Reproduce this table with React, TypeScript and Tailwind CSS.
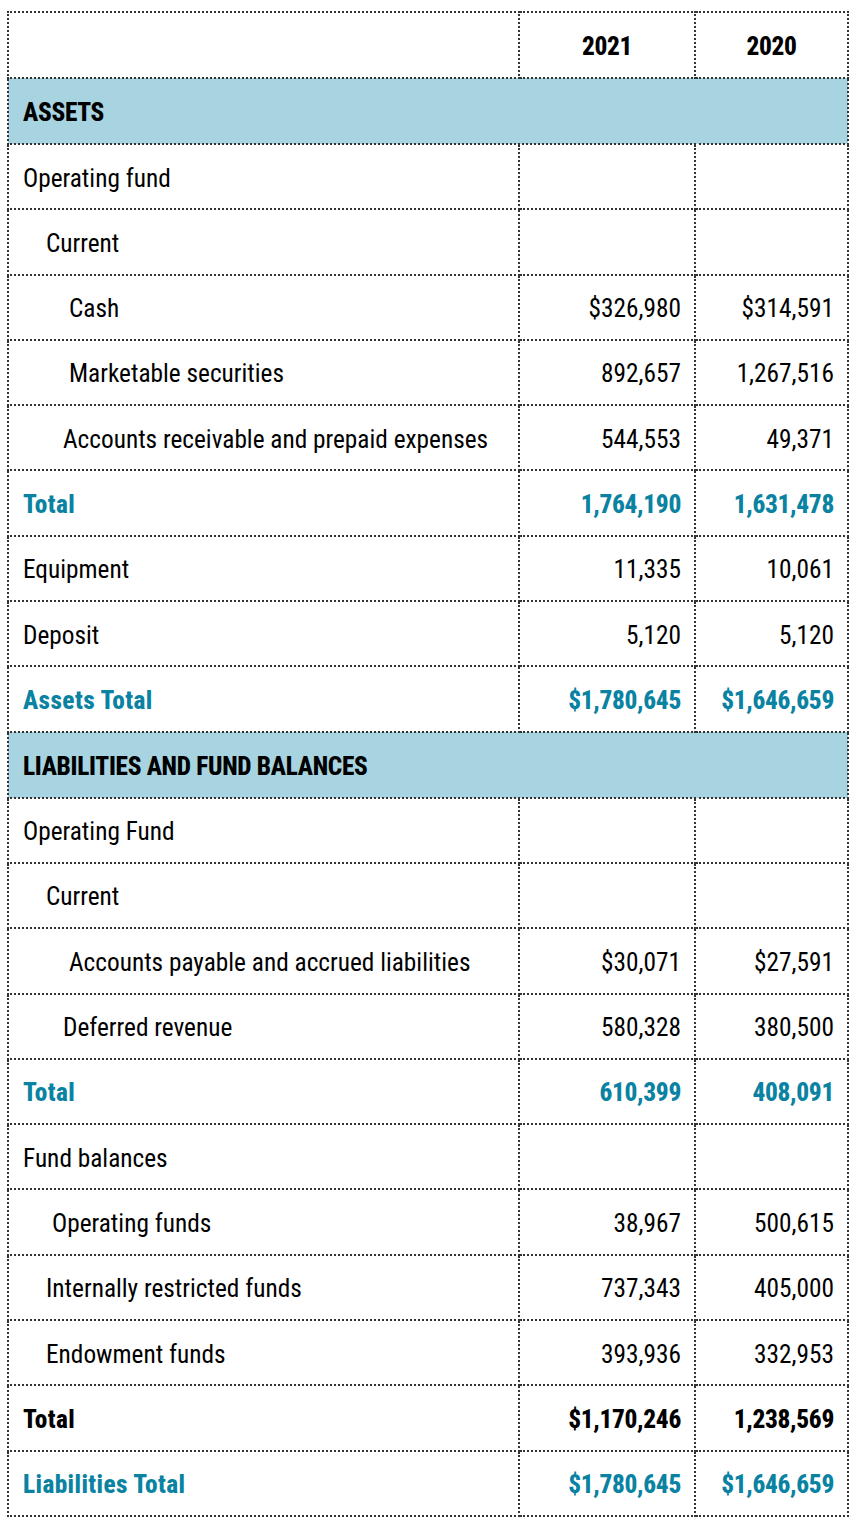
type Row = {
  label: string;
  indent?: number;
  a?: string;
  b?: string;
  kind?: "plain" | "total" | "grand" | "black" | "section";
};

const rows: Row[] = [
  { label: "ASSETS", kind: "section" },
  { label: "Operating fund", indent: 0 },
  { label: "Current", indent: 1 },
  { label: "Cash", indent: 2, a: "$326,980", b: "$314,591" },
  { label: "Marketable securities", indent: 2, a: "892,657", b: "1,267,516" },
  { label: "Accounts receivable and prepaid expenses", indent: 3, a: "544,553", b: "49,371" },
  { label: "Total", kind: "total", a: "1,764,190", b: "1,631,478" },
  { label: "Equipment", a: "11,335", b: "10,061" },
  { label: "Deposit", a: "5,120", b: "5,120" },
  { label: "Assets Total", kind: "total", a: "$1,780,645", b: "$1,646,659" },
  { label: "LIABILITIES AND FUND BALANCES", kind: "section" },
  { label: "Operating Fund", indent: 0 },
  { label: "Current", indent: 1 },
  { label: "Accounts payable and accrued liabilities", indent: 2, a: "$30,071", b: "$27,591" },
  { label: "Deferred revenue", indent: 3, a: "580,328", b: "380,500" },
  { label: "Total", kind: "total", a: "610,399", b: "408,091" },
  { label: "Fund balances", indent: 0 },
  { label: "Operating funds", indent: 4, a: "38,967", b: "500,615" },
  { label: "Internally restricted funds", indent: 1, a: "737,343", b: "405,000" },
  { label: "Endowment funds", indent: 1, a: "393,936", b: "332,953" },
  { label: "Total", kind: "black", a: "$1,170,246", b: "1,238,569" },
  { label: "Liabilities Total", kind: "total", a: "$1,780,645", b: "$1,646,659" },
];

// padding-left per indent level (the source uses uneven spaces)
const indentClass = ["pl-[14px]", "pl-[37px]", "pl-[60px]", "pl-[54px]", "pl-[43px]"];

const cell = "border-2 border-dotted border-[#333] h-[65.3px] text-[25.3px] leading-none pt-[3px]";
const heavy = "font-extrabold tracking-[-0.3px]";

export default function App() {
  return (
    <div
      className="bg-white pt-[11px] pl-[7px] pb-[14px]"
      style={{ fontFamily: '"Roboto Condensed", "Liberation Sans Narrow", "DejaVu Sans Condensed", "Liberation Sans", sans-serif' }}
    >
      <table className="border-collapse w-[840px] table-fixed text-black">
        <colgroup>
          <col className="w-[511px]" />
          <col className="w-[176px]" />
          <col className="w-[153px]" />
        </colgroup>
        <thead>
          <tr>
            <th className={`${cell} h-[66px]`}></th>
            <th className={`${cell} ${heavy} text-center`}>2021</th>
            <th className={`${cell} ${heavy} text-center`}>2020</th>
          </tr>
        </thead>
        <tbody>
          {rows.map((r, i) => {
            if (r.kind === "section") {
              return (
                <tr key={i}>
                  <td colSpan={3} className={`${cell} h-[66px] bg-[#a7d4e0] ${heavy} pl-[14px] text-left`}>
                    {r.label}
                  </td>
                </tr>
              );
            }
            const bold = r.kind === "total" || r.kind === "black";
            const color = r.kind === "total" ? "text-[#0a82a2]" : "text-black";
            const pad = bold ? "pl-[14px]" : indentClass[r.indent ?? 0];
            const w = bold ? heavy : "";
            const lw = bold ? "font-extrabold tracking-[0.4px]" : "";
            return (
              <tr key={i}>
                <td className={`${cell} ${pad} ${color} ${lw} text-left`}>{r.label}</td>
                <td className={`${cell} ${color} ${w} text-right pr-[13px]`}>{r.a}</td>
                <td className={`${cell} ${color} ${w} text-right pr-[13px]`}>{r.b}</td>
              </tr>
            );
          })}
        </tbody>
      </table>
    </div>
  );
}
